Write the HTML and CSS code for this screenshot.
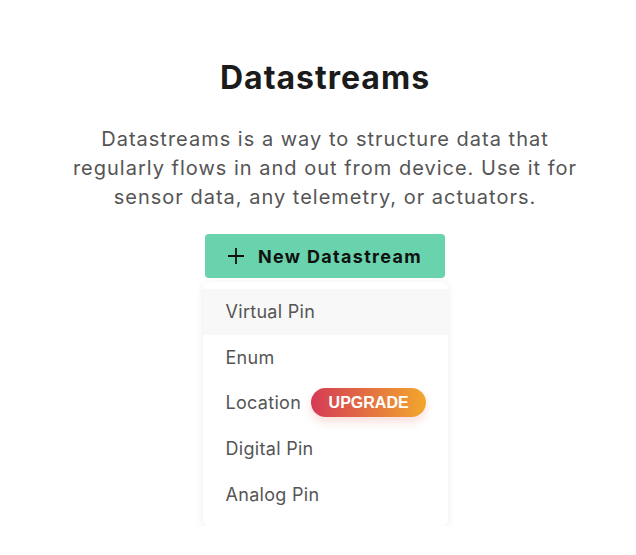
FILE: index.html
```html
<!DOCTYPE html>
<html>
<head>
<meta charset="utf-8">
<link rel="stylesheet" href="styles.css">
</head>
<body>
<main class="page">
  <h1 class="title">Datastreams</h1>
  <p class="desc">Datastreams is a way to structure data that regularly flows in and out from device. Use it for sensor data, any telemetry, or actuators.</p>
  <div class="dropdown">
    <button class="btn">
      <svg class="plus" width="18" height="18" viewBox="0 0 18 18"><path d="M9 1v16M1 9h16" stroke="#111" stroke-width="1.8" fill="none"/></svg>
      <span>New Datastream</span>
    </button>
    <ul class="menu">
      <li class="item active">Virtual Pin</li>
      <li class="item">Enum</li>
      <li class="item">Location <span class="badge">UPGRADE</span></li>
      <li class="item">Digital Pin</li>
      <li class="item">Analog Pin</li>
    </ul>
  </div>
</main>
</body>
</html>
```
FILE: styles.css
```css
html, body {
  margin: 0;
  padding: 0;
  background: #fff;
}
.page {
  width: 636px;
  box-sizing: border-box;
  padding: 59px 0 0 14px;
  display: flex;
  flex-direction: column;
  align-items: center;
  font-family: Inter, "Liberation Sans", Arial, sans-serif;
}
.title {
  margin: 0;
  font-size: 32px;
  font-weight: 700;
  letter-spacing: 1px;
  color: #1b1b1b;
  line-height: 38px;
}
.desc {
  margin: 28px 0 0;
  width: 520px;
  text-align: center;
  font-size: 20px;
  letter-spacing: 1px;
  line-height: 29px;
  color: #555;
}
.dropdown {
  margin-top: 22px;
  display: flex;
  flex-direction: column;
  align-items: flex-start;
  width: 245px;
}
.btn {
  width: 240px;
  height: 44px;
  border: none;
  border-radius: 4px;
  background: #68d3ac;
  display: flex;
  align-items: center;
  justify-content: center;
  gap: 13px;
  font-family: inherit;
  font-size: 18px;
  font-weight: 700;
  letter-spacing: 1.3px;
  color: #111;
  padding: 0;
  margin-left: 2px;
}
.plus {
  flex: none;
}
.menu {
  list-style: none;
  margin: 4px 0 0;
  padding: 7px 0 9px;
  width: 245px;
  background: #fff;
  border-radius: 6px;
  box-shadow: 0 1px 8px rgba(0,0,0,0.08);
}
.item {
  height: 45.6px;
  display: flex;
  align-items: center;
  gap: 10px;
  padding-left: 23px;
  font-size: 18px;
  letter-spacing: 0.3px;
  color: #555;
}
.item.active {
  background: #f8f8f8;
}
.badge {
  display: inline-flex;
  align-items: center;
  justify-content: center;
  height: 29px;
  width: 115px;
  border-radius: 15px;
  background: linear-gradient(90deg, #d53a55 0%, #f2a72d 100%);
  color: #fff;
  font-family: "Liberation Sans", Arial, sans-serif;
  font-size: 16px;
  font-weight: 700;
  letter-spacing: 0;
  box-shadow: 0 5px 10px rgba(220,80,60,0.18);
}
```
